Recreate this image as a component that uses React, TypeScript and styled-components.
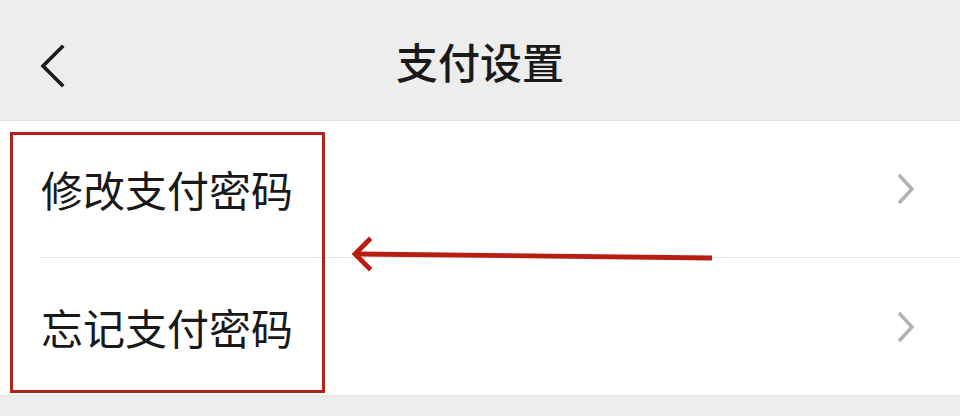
import React from "react";
import styled, { createGlobalStyle } from "styled-components";

const Global = createGlobalStyle`
  html, body { margin: 0; padding: 0; background: #ededed; }
  body { font-family: "Noto Sans CJK SC", "Noto Sans", sans-serif; }
`;

const Page = styled.div`
  position: relative;
  width: 960px;
  height: 416px;
  background: #ededed;
  overflow: hidden;
`;

const Header = styled.header`
  height: 120px;
  display: flex;
  align-items: center;
  justify-content: center;
  position: relative;
  border-bottom: 1px solid #e3e3e3;
  box-sizing: content-box;
`;

const BackButton = styled.div`
  position: absolute;
  left: 38px;
  top: 42px;
  width: 30px;
  height: 48px;
  display: flex;
`;

const Title = styled.h1`
  margin: 0;
  font-size: 42px;
  font-weight: 500;
  color: #1a1a1a;
  line-height: 1;
  margin-top: 2px;
`;

const List = styled.div`
  background: #fff;
  border-bottom: 1px solid #e6e6e6;
`;

const Row = styled.div<{ $last?: boolean }>`
  height: 137px;
  padding-left: 40px;
  display: flex;
  box-sizing: border-box;
`;

const RowInner = styled.div<{ $last?: boolean }>`
  flex: 1;
  display: flex;
  align-items: center;
  justify-content: space-between;
  padding-right: 44px;
  border-bottom: ${(p) => (p.$last ? "none" : "1px solid #e5e5e5")};
`;

const Label = styled.span`
  font-size: 42px;
  font-weight: 400;
  color: #191919;
  line-height: 1;
  margin-left: 1px;
`;

const Chevron = styled.svg`
  width: 20px;
  height: 34px;
  display: block;
`;

const Highlight = styled.div`
  position: absolute;
  left: 10px;
  top: 132px;
  width: 315px;
  height: 261px;
  border: 3px solid #b0221a;
  box-sizing: border-box;
  pointer-events: none;
`;

const ArrowSvg = styled.svg`
  position: absolute;
  left: 0;
  top: 0;
  pointer-events: none;
`;

const items = ["修改支付密码", "忘记支付密码"];

export default function App() {
  return (
    <>
      <Global />
      <Page>
        <Header>
          <BackButton>
            <svg width="30" height="48" viewBox="0 0 30 48">
              <polyline
                points="24,5 5,24 24,43"
                fill="none"
                stroke="#1a1a1a"
                strokeWidth="3.6"
                strokeLinecap="square"
              />
            </svg>
          </BackButton>
          <Title>支付设置</Title>
        </Header>
        <List>
          {items.map((t, i) => (
            <Row key={t} $last={i === items.length - 1}>
              <RowInner $last={i === items.length - 1}>
                <Label>{t}</Label>
                <Chevron viewBox="0 0 20 34">
                  <polyline
                    points="3,3 16,17 3,31"
                    fill="none"
                    stroke="#b2b2b2"
                    strokeWidth="3.4"
                  />
                </Chevron>
              </RowInner>
            </Row>
          ))}
        </List>
        <Highlight />
        <ArrowSvg width="960" height="416" viewBox="0 0 960 416">
          <line x1="712" y1="258" x2="357" y2="254" stroke="#b81d12" strokeWidth="4.8" />
          <polyline
            points="369,240 355,254 369,268"
            fill="none"
            stroke="#b81d12"
            strokeWidth="4.8"
            strokeLinecap="square"
          />
        </ArrowSvg>
      </Page>
    </>
  );
}
